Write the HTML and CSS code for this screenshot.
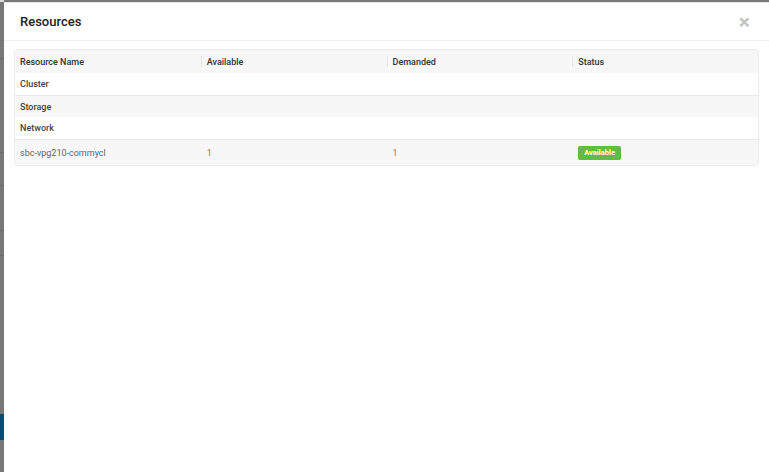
FILE: index.html
```html
<!DOCTYPE html>
<html>
	<head>
		<meta charset="UTF-8">
		<title>Resources</title>
		<link rel="stylesheet" href="styles.css">
	</head>
	<body>
		<div class="page">
			<div class="backdrop">
				<span class="line l1"></span>
				<span class="line l2"></span>
				<span class="line l3"></span>
				<span class="line l4"></span>
				<span class="line l5"></span>
				<span class="active"></span>
			</div>
			<div class="modal">
				<div class="modal-header">
					<h4>Resources</h4>
					<a href="javascript:;" class="close">&times;</a>
				</div>
				<div class="modal-body">
					<table class="res">
						<thead>
							<tr>
								<th>Resource Name</th>
								<th><span class="sep"></span>Available</th>
								<th><span class="sep"></span>Demanded</th>
								<th><span class="sep"></span>Status</th>
							</tr>
						</thead>
						<tbody>
							<tr class="group"><td colspan="4">Cluster</td></tr>
							<tr class="group odd"><td colspan="4">Storage</td></tr>
							<tr class="group"><td colspan="4">Network</td></tr>
							<tr class="item odd">
								<td class="name">sbc-vpg210-commycl</td>
								<td class="num">1</td>
								<td class="num">1</td>
								<td><span class="badge">Available</span></td>
							</tr>
						</tbody>
					</table>
				</div>
			</div>
		</div>
	</body>
</html>
```

FILE: styles.css
```css
*{
	margin:0;
	padding:0;
	box-sizing:border-box;
}
html,body{
	height:100%;
}
body{
	font-family:Roboto,"Liberation Sans",Arial,sans-serif;
	background:#7a7a7a;
	overflow:hidden;
}
.page{
	display:flex;
	height:472px;
}
.backdrop{
	width:4px;
	flex:none;
	position:relative;
	background:#777;
	border-top:2px solid #dcdcdc;
}
.line{
	position:absolute;
	left:0;
	width:4px;
	height:1px;
	background:#6a6a6a;
}
.l1{top:56px;}
.l2{top:150px;}
.l3{top:183px;}
.l4{top:228px;}
.l5{top:253px;}
.active{
	position:absolute;
	left:0;
	top:412px;
	width:4px;
	height:26px;
	background:#0c4a70;
}
.modal{
	flex:1;
	background:#fff;
	margin-top:2px;
	border-top:1px solid #e6e6e6;
}
.modal-header{
	height:38px;
	display:flex;
	align-items:center;
	justify-content:space-between;
	padding:0 19px 0 16px;
	border-bottom:1px solid #f0f0f0;
}
.modal-header h4{
	font-size:13px;
	font-weight:500;
	color:#222;
	margin-top:-1px;
}
.close{
	color:#c2c2c2;
	text-decoration:none;
	font-size:21px;
	font-weight:700;
	line-height:1;
	margin-top:1px;
}
.modal-body{
	padding:8px 10px 0 10px;
}
.res{
	width:745px;
	border-collapse:separate;
	border-spacing:0;
	border:1px solid #ececec;
	border-radius:3px;
	table-layout:fixed;
	font-size:9px;
}
.res th{
	position:relative;
	height:23px;
	text-align:left;
	font-weight:500;
	color:#333;
	background:#f7f7f7;
	padding:0 5px 0 6px;
}
.res th:first-child,.res td:first-child{
	padding-left:5px;
}
.sep{
	position:absolute;
	left:0;
	top:6px;
	width:1px;
	height:11px;
	background:#e4e4e4;
}
.res td{
	padding:0 5px 0 6px;
	height:22px;
	background:#fff;
}
.res tr.odd td{
	background:#f7f7f7;
}
.group td{
	font-weight:500;
	color:#444;
}
.group.odd td,.item td{
	border-top:1px solid #e9e9e9;
}
.item td{
	height:26px;
}
.name{
	color:#666;
}
.num{
	color:#b0702c;
}
.badge{
	display:inline-block;
	background:#62ba47;
	color:#fff;
	font-size:7.5px;
	font-weight:700;
	line-height:9px;
	padding:2.5px 6px;
	border-radius:2px;
}
```
